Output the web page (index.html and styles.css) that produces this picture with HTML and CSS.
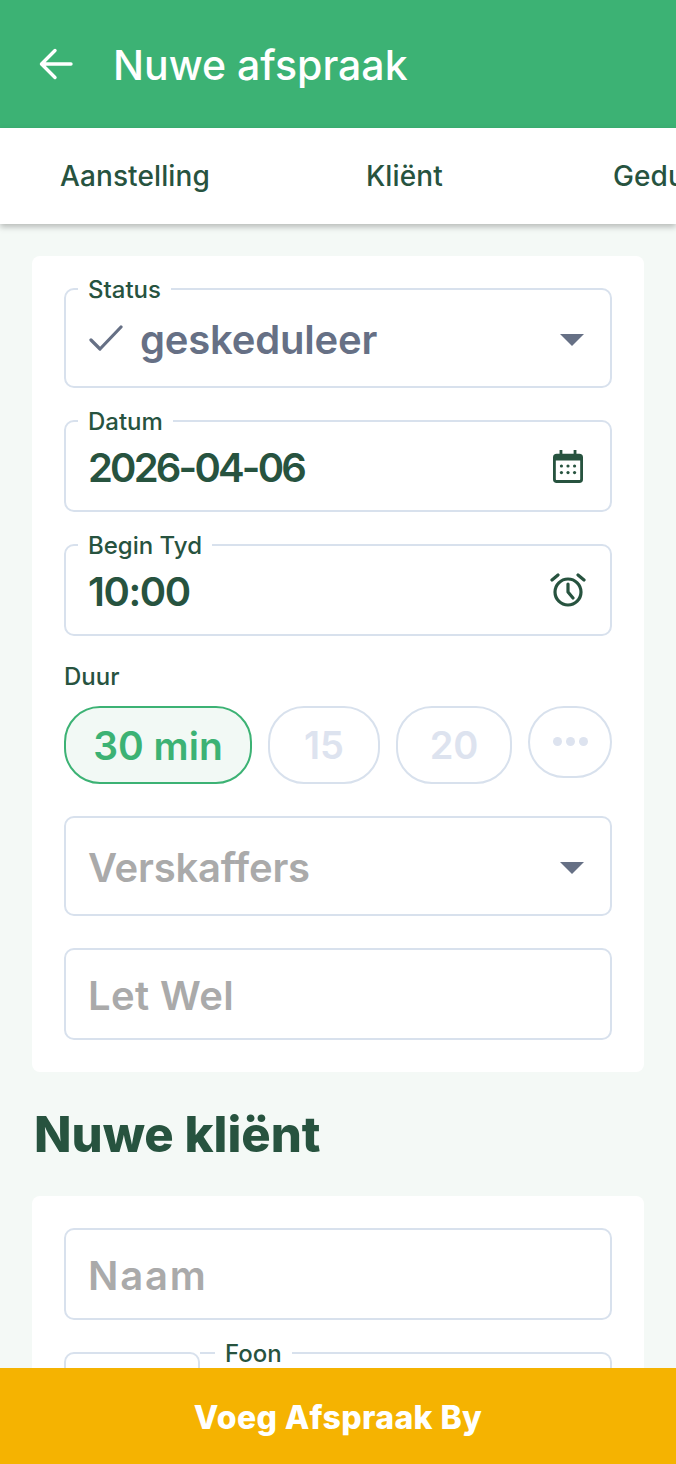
FILE: index.html
```html
<!DOCTYPE html>
<html lang="af">

<head>
    <meta charset="UTF-8">
    <meta name="viewport" content="width=device-width, initial-scale=1.0">
    <title>Nuwe afspraak</title>
    <link rel="stylesheet" href="styles.css">
</head>

<body>
    <div class="app">
        <header class="app-bar">
            <svg class="back-icon" viewBox="0 0 36 36" width="36" height="36" fill="none" stroke="#fff" stroke-width="3.4" stroke-linecap="round" stroke-linejoin="round">
                <path d="M33 18H4M17 4.500 3.500 18 17 31.500" />
            </svg>
            <h1>Nuwe afspraak</h1>
        </header>

        <nav class="tabs">
            <span class="tab tab-first">Aanstelling</span>
            <span class="tab tab-second">Kliënt</span>
            <span class="tab tab-third">Gedurende</span>
        </nav>

        <main class="content">
            <section class="card">
                <div class="field field-select">
                    <label class="float-label">Status</label>
                    <svg class="check-icon" viewBox="0 0 34 26" width="34" height="26" fill="none" stroke="#667085" stroke-width="3.200" stroke-linecap="round" stroke-linejoin="round">
                        <path d="M2 15 11 24 32 2" />
                    </svg>
                    <span class="value value-muted">geskeduleer</span>
                    <span class="caret"></span>
                </div>

                <div class="field field-input">
                    <label class="float-label">Datum</label>
                    <span class="value value-date">2026-04-06</span>
                    <svg class="field-icon icon-calendar" viewBox="0 0 32 36" width="30" height="34" fill="#27533f">
                        <path d="M7 1h3v4h12V1h3v4h3a4 4 0 0 1 4 4v23a4 4 0 0 1-4 4H4a4 4 0 0 1-4-4V9a4 4 0 0 1 4-4h3zM3 12v20a1 1 0 0 0 1 1h24a1 1 0 0 0 1-1V12z" />
                        <circle cx="9" cy="18" r="1.700" />
                        <circle cx="16" cy="18" r="1.700" />
                        <circle cx="23" cy="18" r="1.700" />
                        <circle cx="9" cy="25" r="1.700" />
                        <circle cx="16" cy="25" r="1.700" />
                        <circle cx="23" cy="25" r="1.700" />
                    </svg>
                </div>

                <div class="field field-input">
                    <label class="float-label">Begin Tyd</label>
                    <span class="value value-time">10:00</span>
                    <svg class="field-icon" viewBox="0 0 36 34" width="36" height="34" fill="none" stroke="#27533f" stroke-width="3.200" stroke-linecap="round" stroke-linejoin="round">
                        <circle cx="18" cy="19" r="13" />
                        <path d="M18 11v8l5 6M2 7l6-5M34 7l-6-5" />
                    </svg>
                </div>

                <div class="duration">
                    <span class="duration-label">Duur</span>
                    <div class="chips">
                        <span class="chip chip-active">30 min</span>
                        <span class="chip chip-15">15</span>
                        <span class="chip chip-20">20</span>
                        <span class="chip chip-more">
                            <i></i><i></i><i></i>
                        </span>
                    </div>
                </div>

                <div class="field field-select">
                    <span class="value value-placeholder">Verskaffers</span>
                    <span class="caret"></span>
                </div>

                <div class="field field-input">
                    <span class="value value-placeholder value-note">Let Wel</span>
                </div>
            </section>

            <h2 class="section-title">Nuwe kliënt</h2>

            <section class="card">
                <div class="field field-input">
                    <span class="value value-placeholder value-name">Naam</span>
                </div>

                <div class="phone-row">
                    <div class="field field-input phone-code"></div>
                    <div class="field field-input phone-number">
                        <label class="float-label">Foon</label>
                    </div>
                </div>
            </section>
        </main>

        <button class="submit-btn">Voeg Afspraak By</button>
    </div>
</body>

</html>
```

FILE: styles.css
```css
* {
    box-sizing: border-box;
}

body {
    margin: 0;
    font-family: Inter, "Noto Sans", sans-serif;
    color: #27533f;
    background-color: #f4f9f6;
}

.app {
    height: 1464px;
    display: flex;
    flex-direction: column;
    overflow: hidden;
}

.app-bar {
    flex: none;
    height: 128px;
    display: flex;
    align-items: center;
    gap: 39px;
    padding: 0 38px;
    background-color: #3cb274;
    color: white;
}

.app-bar h1 {
    margin: 2px 0 0;
    font-size: 41px;
    font-weight: 500;
}

.tabs {
    flex: none;
    position: relative;
    height: 96px;
    display: flex;
    align-items: center;
    overflow: hidden;
    background-color: white;
    box-shadow: 0 3px 6px rgba(0, 0, 0, 0.25);
    font-size: 28px;
    font-weight: 500;
    letter-spacing: 0.1px;
}

.tab {
    flex: none;
}

.tab-first {
    margin-left: 60px;
    width: 306px;
}

.tab-second {
    width: 247px;
}

.content {
    flex: 1;
    min-height: 0;
    overflow: hidden;
    padding: 32px 32px 0;
}

.card {
    display: flex;
    flex-direction: column;
    gap: 32px;
    padding: 32px;
    border-radius: 8px;
    background-color: white;
}

.field {
    position: relative;
    display: flex;
    align-items: center;
    border: 2px solid #d8e1ed;
    border-radius: 10px;
    padding: 0 24px 0 23px;
}

.field-select {
    height: 100px;
}

.field-input {
    height: 92px;
}

.float-label {
    position: absolute;
    top: -14px;
    left: 12px;
    padding: 0 10px;
    background-color: white;
    font-size: 24px;
    line-height: 28px;
    font-weight: 500;
}

.value {
    margin-top: 2px;
    font-size: 40px;
    font-weight: 600;
}

.value-muted {
    color: #667085;
    margin-left: 17px;
    letter-spacing: -0.2px;
}

.value-date {
    margin-left: -1px;
    letter-spacing: -2.8px;
}

.value-time {
    margin-left: -1px;
    letter-spacing: -1.4px;
}

.value-placeholder {
    margin-left: -1px;
    color: #aaaaaa;
    letter-spacing: -0.2px;
}

.value-note {
    letter-spacing: 0.4px;
}

.value-name {
    letter-spacing: 1.8px;
}

.check-icon {
    flex: none;
}

.field-icon {
    flex: none;
    margin-left: auto;
}

.icon-calendar {
    margin-right: 3px;
}

.caret {
    margin-left: auto;
    margin-right: 2px;
    margin-top: 3px;
    border-left: 12px solid transparent;
    border-right: 12px solid transparent;
    border-top: 12px solid #667085;
}

.duration {
    display: flex;
    flex-direction: column;
    gap: 14px;
    margin-top: -6px;
}

.duration-label {
    font-size: 24px;
    line-height: 30px;
    font-weight: 500;
}

.chips {
    display: flex;
    align-items: flex-start;
    gap: 16px;
}

.chip {
    display: flex;
    align-items: center;
    justify-content: center;
    height: 78px;
    border: 2px solid #d8e1ed;
    border-radius: 36px;
    font-size: 38px;
    font-weight: 600;
    color: #dde3ef;
}

.chip-active {
    width: 188px;
    border-color: #3cb274;
    background-color: #f2f9f5;
    color: #3cb274;
    font-size: 39px;
}

.chip-15 {
    width: 112px;
}

.chip-20 {
    width: 116px;
}

.chip-more {
    width: 84px;
    height: 72px;
    gap: 4px;
}

.chip-more i {
    width: 9px;
    height: 9px;
    border-radius: 50%;
    background-color: #dde3ef;
    margin-bottom: 2px;
}

.section-title {
    margin: 32px 0 30px 2px;
    font-size: 49px;
    line-height: 62px;
    font-weight: 800;
}

.phone-row {
    display: flex;
}

.phone-code {
    flex: none;
    width: 136px;
}

.phone-number {
    flex: 1;
    border-left: none;
    border-radius: 0 10px 10px 0;
}

.phone-number .float-label {
    left: 15px;
}

.submit-btn {
    flex: none;
    height: 96px;
    padding: 2px 0 0;
    border: none;
    background-color: #f5b301;
    color: white;
    font-family: inherit;
    font-size: 32px;
    font-weight: 800;
    letter-spacing: 0.4px;
}
```
